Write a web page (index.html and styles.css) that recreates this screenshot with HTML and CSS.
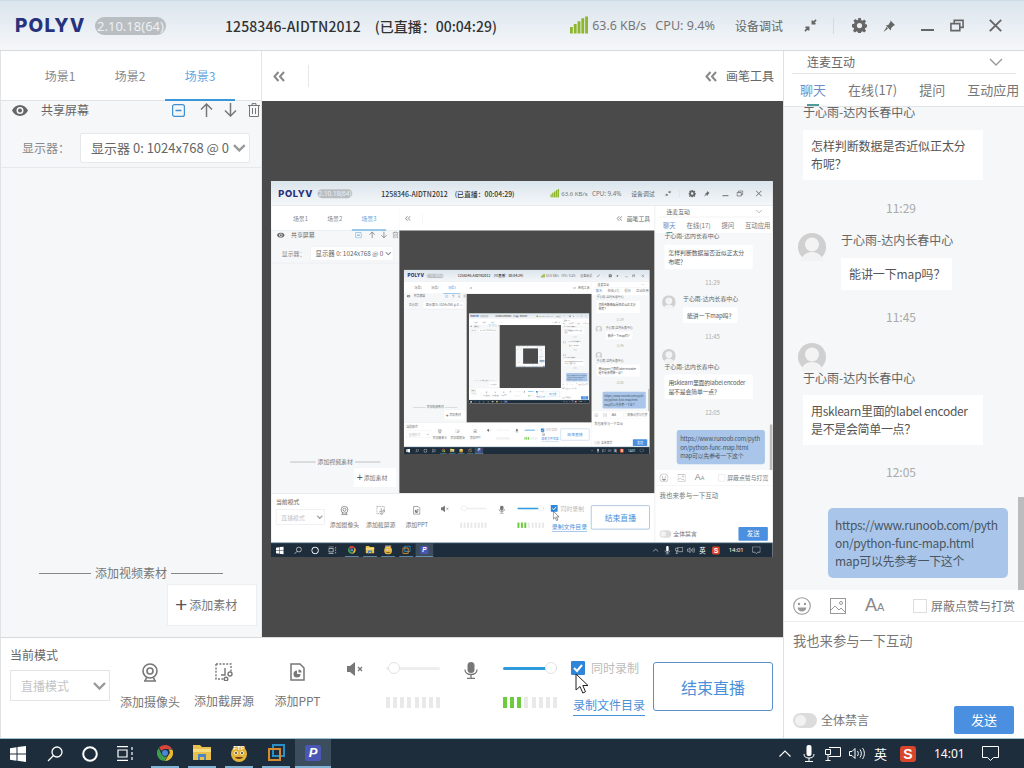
FILE: index.html
```html
<!DOCTYPE html>
<html lang="zh">
<head>
<meta charset="utf-8">
<title>POLYV</title>
<link rel="stylesheet" href="styles.css">
</head>
<body>
<div class="app">
  <header class="titlebar">
    <span class="logo">POLYV</span>
    <span class="version">2.10.18(64)</span>
    <span class="room">1258346-AIDTN2012</span>
    <span class="elapsed">(已直播：00:04:29)</span>
    <span class="spacer"></span>
    <svg class="signal" width="18" height="18" viewBox="0 0 19 18"><path fill="#8db52d" d="M0 11h3v7H0zM4 8h3v10H4zM8 5h3v13H8zM12 2h3v16h-3zM16 0h3v18h-3z"/></svg>
    <span class="stat net">63.6 KB/s</span>
    <span class="stat cpu">CPU: 9.4%</span>
    <span class="stat debug">设备调试</span>
    <svg class="tb-collapse" width="13" height="13" viewBox="0 0 14 14" fill="none" stroke="#666" stroke-width="1.800"><path d="M13 1L9 5M9 1.500V5h3.500M1 13l4-4M5 12.500V9H1.500"/></svg>
    <span class="tb-divider"></span>
    <svg class="tb-gear" width="15" height="15" viewBox="0 0 16 16"><path fill="#666" fill-rule="evenodd" d="M6.600 0h2.800l.4 2.200 1.300.6 1.900-1.300 2 2-1.300 1.900.6 1.300 2.200.4v2.800l-2.200.4-.6 1.300 1.300 1.900-2 2-1.900-1.300-1.300.6-.4 2.200H6.600l-.4-2.200-1.300-.6L3 15.500l-2-2 1.300-1.900-.6-1.300L0 9.900V6.600l2.200-.4.6-1.300L1.500 3l2-2 1.900 1.300 1.300-.6zM8 5.200a2.800 2.800 0 1 0 0 5.600 2.800 2.800 0 0 0 0-5.600z"/></svg>
    <svg class="tb-pin" width="12" height="12" viewBox="0 0 12 12"><path fill="#666" d="M7 0l5 5-1.500.7-2.300 2.300-.4 2.500-5-5 2.500-.4L7.600 1.500zM3.500 7l1.500 1.500L.5 12z"/></svg>
    <svg class="tb-min" width="13" height="13" viewBox="0 0 13 13"><path fill="#666" d="M0 10h13v2H0z"/></svg>
    <svg class="tb-restore" width="14" height="13" viewBox="0 0 15 13" fill="none" stroke="#666" stroke-width="1.700"><path d="M1 4.500h9.500V12H1zM4.500 4V1H14v7.500h-3"/></svg>
    <svg class="tb-close" width="13" height="13" viewBox="0 0 13 13" fill="none" stroke="#666" stroke-width="1.900"><path d="M.8.800l11.400 11.400M12.200.800L.8 12.200"/></svg>
  </header>

  <div class="body">
    <div class="work">
      <div class="upper">
        <aside class="left">
          <nav class="scenes">
            <span class="scene">场景1</span>
            <span class="scene">场景2</span>
            <span class="scene scene-on">场景3</span>
          </nav>
          <div class="layer">
            <svg class="eye" width="16" height="11" viewBox="0 0 16 11"><path fill="#666" fill-rule="evenodd" d="M8 0c3.500 0 6.300 2.200 8 5.500C14.300 8.800 11.500 11 8 11S1.700 8.800 0 5.500C1.700 2.200 4.500 0 8 0zm0 2a3.500 3.500 0 1 0 0 7 3.500 3.500 0 0 0 0-7zm0 1.500a2 2 0 1 1 0 4 2 2 0 0 1 0-4z"/></svg>
            <span class="layer-name">共享屏幕</span>
            <svg class="l-minus" width="13" height="13" viewBox="0 0 13 13" fill="none" stroke="#3f8fd2" stroke-width="1.200"><rect x=".6" y=".6" width="11.800" height="11.800" rx="2"/><path d="M3.500 6.500h6" stroke-width="1.500"/></svg>
            <svg class="l-up" width="13" height="14" viewBox="0 0 13 14" fill="none" stroke="#777" stroke-width="1.500"><path d="M6.500 14V1M1 6.500L6.500 1 12 6.500"/></svg>
            <svg class="l-down" width="13" height="14" viewBox="0 0 13 14" fill="none" stroke="#777" stroke-width="1.500"><path d="M6.500 0v13M1 7.500L6.500 13 12 7.500"/></svg>
            <svg class="l-trash" width="12" height="14" viewBox="0 0 12 14" fill="none" stroke="#777" stroke-width="1"><path d="M0 2.500h12M4 2.500V.6h4v1.900M1.500 2.500v11h9v-11M4.500 5v6M7.500 5v6"/></svg>
          </div>
          <div class="display">
            <span class="display-label">显示器：</span>
            <div class="display-select">
              <span class="display-value">显示器 0: 1024x768 @ 0</span>
              <svg width="13" height="8" viewBox="0 0 13 8" fill="none" stroke="#999" stroke-width="2.400"><path d="M1 1l5.500 5.500L12 1"/></svg>
            </div>
          </div>
          <div class="left-fill"></div>
          <div class="material-head"><span class="rule"></span><span>添加视频素材</span><span class="rule"></span></div>
          <div class="material-row">
            <button class="material-btn"><span class="plus">+</span>添加素材</button>
          </div>
        </aside>
        <main class="center">
          <div class="center-bar">
            <svg class="chev" width="12" height="11" viewBox="0 0 12 11" fill="none" stroke="#888" stroke-width="2"><path d="M5.500 1L1.500 5.500l4 4.500M11 1L7 5.500l4 4.500"/></svg>
            <span class="bar-divider"></span>
            <span class="spacer"></span>
            <svg class="chev" width="12" height="11" viewBox="0 0 12 11" fill="none" stroke="#888" stroke-width="2"><path d="M5.500 1L1.500 5.500l4 4.500M11 1L7 5.500l4 4.500"/></svg>
            <span class="pen">画笔工具</span>
          </div>
          <div class="viewer"><div class="mirror"></div></div>
        </main>
      </div>

      <section class="controls">
        <div class="mode">
          <div class="mode-label">当前模式</div>
          <div class="mode-select"><span>直播模式</span>
            <svg width="13" height="8" viewBox="0 0 13 8" fill="none" stroke="#999" stroke-width="2.400"><path d="M1 1l5.500 5.500L12 1"/></svg>
          </div>
        </div>
        <div class="tool tool-cam">
          <svg width="18" height="19" viewBox="0 0 18 19" fill="none" stroke="#777" stroke-width="1.600"><circle cx="9" cy="8" r="7"/><circle cx="9" cy="8" r="3"/><path d="M3 18h12M5.500 14.500L4 18M12.500 14.500L14 18"/></svg>
          <span>添加摄像头</span>
        </div>
        <div class="tool tool-cap">
          <svg width="18" height="18" viewBox="0 0 18 18" fill="none" stroke="#777" stroke-width="1.400"><path stroke-dasharray="2 1.400" d="M1 1h15v8M1 1v15h8"/><path d="M10 5v7H6"/><circle cx="15" cy="11" r="2"/><circle cx="11" cy="16" r="1.800"/></svg>
          <span>添加截屏源</span>
        </div>
        <div class="tool tool-ppt">
          <svg width="15" height="18" viewBox="0 0 15 18" fill="none" stroke="#777" stroke-width="1.500"><path d="M1 1h9l4 4v12H1z"/><path fill="#777" stroke="none" d="M7 7.500v3.500h3.500A3.500 3.500 0 1 1 7 7.500zM8.500 6.500a3 3 0 0 1 3 3h-3z"/></svg>
          <span>添加PPT</span>
        </div>
        <div class="audio audio-spk">
          <svg class="a-icon" width="17" height="14" viewBox="0 0 17 14"><path fill="#777" d="M0 4h3l5-4v14l-5-4H0z"/><path fill="none" stroke="#777" stroke-width="1.300" d="M11 5l4 4M15 5l-4 4"/></svg>
          <div class="meter">
            <div class="slider slider-off"><span class="knob"></span></div>
            <div class="levels"><i></i><i></i><i></i><i></i><i></i><i></i><i></i><i></i></div>
          </div>
        </div>
        <div class="audio audio-mic">
          <svg class="a-icon" width="14" height="17" viewBox="0 0 14 17"><rect x="3.500" width="7" height="11" rx="3.500" fill="#777"/><path fill="none" stroke="#777" stroke-width="1.300" d="M1 7.500c0 3 2.500 5 6 5s6-2 6-5M7 12.500V16M3 16.300h8"/></svg>
          <div class="meter">
            <div class="slider slider-on"><span class="knob"></span></div>
            <div class="levels"><i class="lv"></i><i class="lv"></i><i class="lv"></i><i></i><i></i><i></i><i></i><i></i></div>
          </div>
        </div>
        <div class="record">
          <div class="record-check">
            <span class="check"><svg width="14" height="14" viewBox="0 0 14 14" fill="none" stroke="#fff" stroke-width="2"><path d="M3 7l3 3 5-6"/></svg></span>
            <span class="record-label">同时录制</span>
          </div>
          <a class="record-dir">录制文件目录</a>
        </div>
        <button class="end">结束直播</button>
      </section>
    </div>

    <aside class="right">
      <div class="mic-head">
        <span>连麦互动</span>
        <svg width="14" height="8" viewBox="0 0 14 8" fill="none" stroke="#999" stroke-width="1.400"><path d="M1 1l6 6 6-6"/></svg>
      </div>
      <nav class="chat-tabs">
        <span class="chat-tab chat-tab-on">聊天</span>
        <span class="chat-tab">在线(17)</span>
        <span class="chat-tab">提问</span>
        <span class="chat-tab">互动应用</span>
      </nav>
      <div class="chat">
        <div class="msg-name">于心雨-达内长春中心</div>
        <div class="bubble bubble-wide">怎样判断数据是否近似正太分<br>布呢？</div>
        <div class="time time-a">11:29</div>
        <div class="msg-row">
          <svg class="avatar" width="28" height="28" viewBox="0 0 28 28"><circle cx="14" cy="14" r="14" fill="#d0d0d0"/><circle cx="14" cy="11.500" r="7" fill="#f3f3f3"/><path fill="#f3f3f3" d="M3 28c1-6 6-9 11-9s10 3 11 9z"/></svg>
          <div class="msg-col">
            <div class="msg-name msg-name-side">于心雨-达内长春中心</div>
            <div class="bubble bubble-short">能讲一下map吗？</div>
          </div>
        </div>
        <div class="time time-b">11:45</div>
        <svg class="avatar" width="28" height="28" viewBox="0 0 28 28"><circle cx="14" cy="14" r="14" fill="#d0d0d0"/><circle cx="14" cy="11.500" r="7" fill="#f3f3f3"/><path fill="#f3f3f3" d="M3 28c1-6 6-9 11-9s10 3 11 9z"/></svg>
        <div class="msg-name msg-name-under">于心雨-达内长春中心</div>
        <div class="bubble bubble-wide bubble-tight">用sklearn里面的label encoder<br>是不是会简单一点？</div>
        <div class="time time-c">12:05</div>
        <div class="bubble-own">https://www.runoob.com/pyth<br>on/python-func-map.html<br>map可以先参考一下这个</div>
        <span class="scrollbar"></span>
      </div>
      <div class="chat-tools">
        <svg width="18" height="18" viewBox="0 0 18 18"><circle cx="9" cy="9" r="8.300" fill="none" stroke="#999" stroke-width="1.100"/><circle cx="6" cy="7" r="1.200" fill="#999"/><circle cx="12" cy="7" r="1.200" fill="#999"/><path fill="#999" d="M4.500 10.500h9c-.5 2.500-2.300 4-4.500 4s-4-1.500-4.500-4z"/></svg>
        <svg class="t-img" width="16" height="16" viewBox="0 0 16 16" fill="none" stroke="#999" stroke-width="1"><rect x=".5" y=".5" width="15" height="15"/><circle cx="11" cy="5" r="1.500"/><path d="M1 12l4-4 4 4 2-2 4 4"/></svg>
        <span class="t-aa"><b>A</b><small>A</small></span>
        <span class="spacer"></span>
        <span class="t-box"></span>
        <span class="t-label">屏蔽点赞与打赏</span>
      </div>
      <div class="chat-input">我也来参与一下互动</div>
      <div class="chat-foot">
        <span class="toggle"><span class="toggle-dot"></span></span>
        <span class="foot-label">全体禁言</span>
        <span class="spacer"></span>
        <button class="send">发送</button>
      </div>
    </aside>
  </div>

  <footer class="taskbar">
    <svg class="tk-win" width="16" height="16" viewBox="0 0 16 16"><path fill="#fff" d="M0 2.300l6.500-1v6.300H0zM7.500 1.100L16 0v7.600H7.500zM0 8.500h6.500v6.300L0 13.800zM7.500 8.500H16V16l-8.500-1.200z"/></svg>
    <svg class="tk-search" width="16" height="16" viewBox="0 0 16 16" fill="none" stroke="#fff" stroke-width="1.300"><circle cx="10" cy="6" r="5"/><path d="M6.500 9.500L1 15"/></svg>
    <svg class="tk-cortana" width="16" height="16" viewBox="0 0 16 16" fill="none" stroke="#fff" stroke-width="2"><circle cx="8" cy="8" r="6.800"/></svg>
    <svg class="tk-view" width="17" height="15" viewBox="0 0 17 15" fill="none" stroke="#fff" stroke-width="1.200"><path d="M0 .6h11M0 14.400h11M1 4h9v7H1zM15 1v3M15 6v3M15 11v3"/></svg>
    <span class="tk-app tk-chrome"><svg width="16" height="16" viewBox="0 0 16 16"><path fill="#d9453b" d="M8 0a8 8 0 0 1 7 4H8a4 4 0 0 0-3.500 2L2 2.500A8 8 0 0 1 8 0z"/><path fill="#e9b92f" d="M15.300 4.500A8 8 0 0 1 8 16l3.500-6a4 4 0 0 0 0-5.500z"/><path fill="#3f9e4d" d="M1.700 3A8 8 0 0 0 7.500 16l3-5a4 4 0 0 1-6-2z"/><circle cx="8" cy="8" r="3" fill="#4a85d8"/></svg></span>
    <span class="tk-app"><svg width="18" height="15" viewBox="0 0 18 15"><path fill="#e8c04e" d="M0 0h7l2 2h9v13H0z"/><path fill="#f7dd82" d="M0 4h18v3H0z"/><path fill="#4a86c5" d="M5 9h8v6h-2v-3H7v3H5z"/></svg></span>
    <span class="tk-app"><svg width="18" height="18" viewBox="0 0 18 18"><circle cx="9" cy="10" r="8" fill="#e2b43a"/><circle cx="6" cy="9" r="1.800" fill="#fff"/><circle cx="12" cy="9" r="1.800" fill="#fff"/><circle cx="6" cy="9" r=".9" fill="#222"/><circle cx="12" cy="9" r=".9" fill="#222"/><path fill="#6b3d12" d="M5 13h8c-1 2.500-7 2.500-8 0z"/><text x="9" y="5.500" class="ftp">FTP</text></svg></span>
    <span class="tk-app"><svg width="17" height="17" viewBox="0 0 17 17" fill="none" stroke-width="2"><path stroke="#2a8fc4" d="M5 1h11v11H5z"/><path stroke="#d98a2b" d="M1 5h11v11H1z"/></svg></span>
    <span class="tk-app tk-active"><span class="tk-p">P</span></span>
    <span class="spacer"></span>
    <svg class="tk-up" width="12" height="7" viewBox="0 0 12 7" fill="none" stroke="#fff" stroke-width="1.100"><path d="M.5 6.500L6 1l5.500 5.500"/></svg>
    <svg class="tk-mic" width="12" height="17" viewBox="0 0 12 17"><rect x="3.500" width="5" height="11" rx="2" fill="#fff"/><path fill="none" stroke="#fff" d="M1 9c0 3 2 4 5 4s5-1 5-4M6 13v3M2 16.500h8"/></svg>
    <svg class="tk-net" width="16" height="14" viewBox="0 0 16 14" fill="none" stroke="#fff"><path d="M4 .5h11.500v9H4M.5 2.500h5v5h-5zM3 7.500V13M.5 13.500h5"/></svg>
    <svg class="tk-vol" width="16" height="13" viewBox="0 0 16 13" fill="none" stroke="#fff"><path d="M.5 4.500h2.500l3-3v10l-3-3H.5zM8.500 4c1 1.500 1 3.500 0 5M11 2.500c1.800 2.500 1.800 5.500 0 8M13.500 1c2.500 3.500 2.500 7.500 0 11"/></svg>
    <span class="tk-ime">英</span>
    <span class="tk-s">S</span>
    <span class="tk-clock">14:01</span>
    <svg class="tk-note" width="17" height="15" viewBox="0 0 17 15" fill="none" stroke="#fff"><path d="M.5.500h16v11h-5l-3 3-3-3h-5z"/></svg>
  </footer>

  <svg class="cursor" width="14" height="21" viewBox="0 0 14 21"><path fill="#fff" stroke="#222" stroke-width="1" d="M1 1v16l4-3.500 2.800 6.500 2.700-1.200L7.800 12.500H13z"/></svg>
</div>
<script src="mirror.js"></script>
</body>
</html>
```
FILE: mirror.js
```js
// The viewer shows the app's own screen, so it contains itself a few levels deep.
var app = document.querySelector('.app');
var template = app.cloneNode(true);
var slot = app.querySelector('.mirror');
for (var level = 0; level < 4; level++) {
  if (level === 3) slot.classList.add('mirror-far');
  var copy = template.cloneNode(true);
  slot.appendChild(copy);
  slot = copy.querySelector('.mirror');
}
```
FILE: styles.css
```css
* { box-sizing: border-box; }
html, body { margin: 0; padding: 0; overflow: hidden; background: #fff; }
.app {
  position: relative;
  flex: none;
  width: 1024px;
  height: 768px;
  display: flex;
  flex-direction: column;
  overflow: hidden;
  background: #fff;
  font-family: "Noto Sans CJK SC", "Noto Sans", sans-serif;
  font-size: 12px;
  line-height: 18px;
  color: #666;
}
.spacer { flex: 1; }

/* title bar */
.titlebar {
  flex: none;
  height: 51px;
  display: flex;
  align-items: center;
  padding: 0 22px 0 15px;
  background: linear-gradient(#dbe5ed, #f5f7f9);
  border-bottom: 1px solid #d7dbde;
  border-top: 1px solid #cddbe6;
}
.logo { width: 71px; font-family: Inter, sans-serif; font-weight: 800; font-size: 19px; letter-spacing: 1.2px; color: #28327c; line-height: 20px; }
.version { margin-left: 9px; width: 71px; height: 18px; border-radius: 9px; background: #b9bec3; color: #eef0f2; font-size: 13px; line-height: 18px; text-align: center; font-family: "Noto Sans", sans-serif; }
.room { margin-left: 59px; font-size: 14px; font-weight: 500; color: #333; letter-spacing: .1px; }
.elapsed { margin-left: 14px; font-size: 14px; font-weight: 500; color: #333; }
.signal { margin-top: -1px; }
.stat { color: #777; }
.net { margin-left: 4px; font-size: 12.400px; font-family: "Noto Sans", sans-serif; }
.cpu { margin-left: 9px; font-size: 12.600px; font-family: "Noto Sans", sans-serif; }
.debug { margin-left: 20px; color: #666; }
.tb-collapse { margin-left: 21px; }
.tb-divider { margin-left: 16px; width: 1px; height: 16px; background: #d5dade; }
.tb-gear { margin-left: 18px; }
.tb-pin { margin-left: 16px; }
.tb-min { margin-left: 26px; }
.tb-restore { margin-left: 16px; }
.tb-close { margin-left: 25px; }

/* main layout */
.body { flex: 1; min-height: 0; display: flex; }
.work { width: 783px; display: flex; flex-direction: column; }
.upper { flex: 1; min-height: 0; display: flex; }

/* left panel */
.left {
  width: 262px;
  display: flex;
  flex-direction: column;
  background: #f5f7f9;
  border-left: 1px solid #dfe3e6;
  border-right: 1px solid #e4e7ea;
}
.scenes {
  height: 50px;
  flex: none;
  display: flex;
  background: #fff;
  border-bottom: 1px solid #dfe3e6;
  padding-left: 24px;
}
.scene { width: 70px; text-align: center; line-height: 50px; font-size: 12px; color: #888; height: 50px; }
.scene-on { color: #64a6de; border-bottom: 2px solid #3a97d8; }
.layer { flex: none; height: 18px; display: flex; align-items: center; padding-left: 11px; }
.layer-name { margin-left: 13px; color: #666; }
.l-minus { margin-left: 83px; }
.l-up { margin-left: 15px; }
.l-down { margin-left: 11px; }
.l-trash { margin-left: 11px; }
.display { flex: none; height: 49px; display: flex; align-items: flex-start; padding: 14px 0 0 21px; border-bottom: 1px solid #e6e9ec; }
.display-label { width: 58px; line-height: 29px; color: #888; }
.display-select {
  width: 170px;
  height: 30px;
  display: flex;
  align-items: center;
  justify-content: space-between;
  padding: 0 3px 0 10px;
  background: #fff;
  border: 1px solid #e6e9ec;
  border-radius: 2px;
}
.display-value { font-size: 13px; white-space: nowrap; color: #666; width: 146px; overflow: hidden; }
.left-fill { flex: 1; }
.material-head { flex: none; display: flex; align-items: center; justify-content: center; gap: 4px; color: #777; }
.rule { width: 52px; height: 1px; background: #888; }
.material-row { flex: none; display: flex; justify-content: flex-end; padding: 2px 4px 11px 0; }
.material-btn { width: 90px; height: 42px; padding: 0 0 0 7px; border: 1px solid #eceff1; background: #fff; font: inherit; color: #777; display: flex; align-items: center; }
.plus { font-size: 21px; margin-right: 2px; color: #555; font-family: "Liberation Sans", sans-serif; line-height: 20px; }

/* center */
.center { flex: 1; min-width: 0; display: flex; flex-direction: column; }
.center-bar { flex: none; height: 50px; display: flex; align-items: center; padding: 0 9px 0 11px; background: #fff; }
.bar-divider { margin-left: 23px; width: 1px; height: 22px; background: #e8e8e8; }
.pen { margin-left: 9px; color: #666; }
.viewer { flex: 1; min-height: 0; display: flex; align-items: center; justify-content: center; padding-right: 1px; background: #4a4a4a; }
.mirror { flex: none; width: 502px; height: 376px; overflow: hidden; }
.mirror > .app { transform: scale(.49); transform-origin: 0 0; }
.mirror-far { width: 251px; height: 188px; }
.mirror-far > .app { transform: scale(.245); }

/* bottom controls */
.controls { flex: none; height: 101px; display: flex; background: #fff; border-top: 1px solid #d9d9d9; border-left: 1px solid #dfe3e6; }
.mode { margin-left: 9px; width: 100px; padding-top: 8px; }
.mode-label { color: #666; }
.mode-select { margin-top: 6px; height: 31px; display: flex; align-items: center; justify-content: space-between; padding: 0 3px 0 10px; border: 1px solid #e3e3e3; color: #c4c4c4; font-size: 12px; }
.tool { display: flex; flex-direction: column; align-items: center; padding-top: 25px; white-space: nowrap; color: #777; }
.tool span { margin-top: 11px; }
.tool-cam { margin-left: 10px; width: 60px; }
.tool-cap { margin-left: 14px; width: 60px; }
.tool-ppt { margin-left: 21px; width: 45px; }
.audio { display: flex; padding-top: 24px; }
.a-icon { margin-top: 0; }
.audio-spk { margin-left: 27px; }
.audio-mic { margin-left: 24px; }
.audio-spk .meter { margin-left: 22px; }
.audio-mic .meter { margin-left: 25px; }
.meter { width: 54px; }
.slider { position: relative; height: 3px; margin-top: 5px; border-radius: 2px; }
.slider-off { background: #eee; }
.slider-on { background: #2f9bdb; }
.knob { position: absolute; top: -5px; width: 12px; height: 12px; border-radius: 50%; background: #fff; border: 1px solid #e3e3e3; }
.slider-off .knob { left: 2px; }
.slider-on .knob { right: 0; }
.levels { margin-top: 27px; display: flex; justify-content: space-between; height: 11px; }
.levels i { width: 4px; background: #e9e9e9; }
.levels .lv { background: #6ccb3f; }
.record { margin-left: 14px; width: 75px; padding-top: 21px; }
.record-check { display: flex; align-items: center; gap: 6px; }
.check { width: 14px; height: 14px; background: #2f86d8; border-radius: 1px; display: block; }
.check svg { display: block; }
.record-label { color: #bbb; white-space: nowrap; }
.record-dir { display: inline-block; margin: 19px 0 0 2px; color: #4a90d9; white-space: nowrap; border-bottom: 1px solid #4a90d9; padding-bottom: 1px; }
.end { margin: 24px 0 0 7px; width: 120px; height: 49px; background: #fff; border: 1px solid #5b8fc7; border-radius: 3px; color: #4a90d9; font: inherit; font-size: 16px; padding: 0; }

/* chat */
.right { width: 241px; display: flex; flex-direction: column; background: #fff; border-left: 1px solid #e0e0e0; }
.mic-head { flex: none; height: 23px; margin: 0 8px 0 8px; padding: 0 13px 0 15px; display: flex; align-items: center; justify-content: space-between; border-bottom: 1px solid #e6e6e6; color: #666; }
.chat-tabs { flex: none; height: 33px; display: flex; gap: 22px; padding-left: 16px; border-bottom: 1px solid #e2e5e7; white-space: nowrap; }
.chat-tab { font-size: 13px; line-height: 31px; color: #777; height: 32px; }
.chat-tab-on { color: #6b8fc9; background: linear-gradient(#4f9a9a, #4f9a9a) no-repeat center bottom / 12px 2px; }
.chat {
  position: relative;
  flex: 1;
  min-height: 0;
  display: flex;
  flex-direction: column;
  justify-content: flex-end;
  overflow: hidden;
  background: #f5f7f9;
  padding: 0 16px 12px 14px;
}
.msg-name { flex: none; color: #666; white-space: nowrap; padding-left: 5px; }
.bubble { flex: none; background: #fff; color: #555; padding: 7px 8px; line-height: 18px; white-space: nowrap; margin-left: 5px; letter-spacing: -.1px; }
.msg-name + .bubble { margin-top: 9px; }
.msg-name + .bubble-tight { margin-top: 8px; letter-spacing: -.35px; }
.bubble-wide { width: 180px; height: 50px; }
.time { flex: none; text-align: center; color: #aaa; margin-top: 19px; margin-bottom: 17px; width: 206px; }
.time-a { margin-bottom: 16px; }
.msg-row { flex: none; display: flex; }
.avatar { flex: none; }
.msg-col { margin-left: 15px; margin-top: -2px; }
.msg-name-side { padding-left: 0; }
.bubble-short { margin: 8px 0 0; width: 111px; height: 32px; }
.time-b { margin-top: 18px; margin-bottom: 17px; }
.time-c { margin-top: 18px; margin-bottom: 27px; }
.msg-name-under { margin-top: -2px; }
.bubble-own { flex: none; align-self: flex-end; width: 180px; height: 70px; padding: 8px 7px; background: #a9c6ea; border-radius: 5px; color: #4a5560; line-height: 18px; white-space: nowrap; font-size: 12px; letter-spacing: -.35px; }
.scrollbar { position: absolute; right: 0; bottom: 0; width: 6px; height: 93px; background: #bcbcbc; }
.chat-tools { flex: none; height: 32px; display: flex; align-items: center; padding: 0 9px 0 9px; border-bottom: 1px solid #ececec; }
.t-img { margin-left: 19px; }
.t-aa { margin-left: 19px; color: #888; font-family: "Liberation Sans", sans-serif; }
.t-aa b { font-weight: 400; font-size: 18px; }
.t-aa small { font-size: 11px; }
.t-box { width: 14px; height: 14px; background: #fff; border: 1px solid #ddd; }
.t-label { margin-left: 4px; color: #777; }
.chat-input { flex: none; height: 83px; padding: 10px 9px; font-size: 13.300px; color: #777; }
.chat-foot { flex: none; height: 33px; display: flex; align-items: flex-start; padding: 0 10px 0 9px; }
.toggle { margin-top: 8px; width: 24px; height: 15px; border-radius: 8px; background: #dcdcdc; display: block; padding: 2px; }
.toggle-dot { display: block; width: 11px; height: 11px; border-radius: 50%; background: #f2f2f2; }
.foot-label { margin: 6px 0 0 4px; color: #777; }
.send { width: 60px; height: 28px; border: 0; border-radius: 2px; background: #4a8fe0; color: #fff; font: inherit; font-size: 13px; padding: 0; margin-top: 1px; }

/* taskbar */
.taskbar { flex: none; height: 30px; display: flex; align-items: center; padding: 0 25px 0 10px; background: #1e2d3c; color: #fff; border-top: 1px solid #9cc3d6; }
.tk-search { margin-left: 21px; }
.tk-cortana { margin-left: 19px; }
.tk-view { margin-left: 19px; }
.tk-app { width: 28px; height: 29px; margin-left: 9px; display: flex; align-items: center; justify-content: center; border-bottom: 2px solid #7fb4d4; }
.tk-chrome { margin-left: 17px; }
.tk-active { margin-left: 5px; width: 36px; background: #3c4d5e; }
.tk-p { width: 16px; height: 16px; display: block; background: #4a57b5; border-radius: 2px; color: #fff; font-size: 13px; line-height: 16px; font-weight: 700; font-style: italic; text-align: center; font-family: "Liberation Sans", sans-serif; }
.ftp { font-family: "Liberation Sans", sans-serif; font-size: 6px; font-weight: 700; fill: #fff; text-anchor: middle; }
.tk-mic { margin-left: 12px; }
.tk-net { margin-left: 10px; }
.tk-vol { margin-left: 8px; }
.tk-ime { margin-left: 9px; font-size: 13px; }
.tk-s { margin-left: 13px; width: 16px; height: 16px; display: block; background: #d9452a; border-radius: 3px; font-family: "Liberation Sans", sans-serif; font-weight: 700; font-size: 14px; line-height: 16px; text-align: center; color: #fff; }
.tk-clock { margin-left: 18px; width: 30px; font-size: 12px; white-space: nowrap; font-family: "Noto Sans", sans-serif; }
.tk-note { margin-left: 18px; }

.cursor { position: absolute; left: 575px; top: 673px; }
```
